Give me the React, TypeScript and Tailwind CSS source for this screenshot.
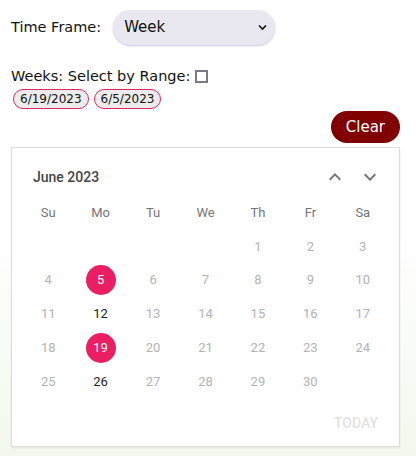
import { useState } from "react";

const weekdays = ["Su", "Mo", "Tu", "We", "Th", "Fr", "Sa"];

// June 2023 starts on a Thursday
const cells: (number | null)[] = [null, null, null, null, ...Array.from({ length: 30 }, (_, i) => i + 1)];
while (cells.length % 7) cells.push(null);

const selected = [5, 19];
const enabled = [12, 26];

function Chevron({ up }: { up?: boolean }) {
  return (
    <svg width="24" height="24" viewBox="0 0 24 24" fill="#757575">
      {up ? (
        <path d="M7.41 15.41 12 10.83l4.59 4.58L18 14l-6-6-6 6z" />
      ) : (
        <path d="M7.41 8.59 12 13.17l4.59-4.58L18 10l-6 6-6-6z" />
      )}
    </svg>
  );
}

export default function App() {
  const [byRange, setByRange] = useState(false);

  return (
    <main
      className="h-[456px] w-[416px] overflow-hidden bg-gradient-to-b from-white via-white to-[#f3f8ee] px-[11px] pt-[10px] text-[#111]"
      style={{ fontFamily: '"DejaVu Sans", sans-serif' }}
    >
      <div className="flex items-center">
        <label className="text-[14.5px]">Time Frame:</label>
        <div className="relative ml-[12px]">
          <select
            defaultValue="week"
            className="h-[35px] w-[162px] appearance-none rounded-full bg-[#e9e7ef] pl-[11px] text-[15px] shadow-[0_1px_2px_rgba(90,90,180,0.35)] outline-none"
          >
            <option value="day">Day</option>
            <option value="week">Week</option>
            <option value="month">Month</option>
          </select>
          <svg className="pointer-events-none absolute right-[8px] top-[14px]" width="9" height="7" viewBox="0 0 9 7">
            <path d="M1 1.5l3.5 3.5L8 1.5" fill="none" stroke="#111" strokeWidth="1.6" />
          </svg>
        </div>
      </div>

      <div className="mt-[21px] flex items-center text-[14.5px]">
        <span>Weeks: Select by Range:</span>
        <input
          type="checkbox"
          checked={byRange}
          onChange={(e) => setByRange(e.target.checked)}
          className="ml-[5px] h-[13px] w-[13px] appearance-none border-2 border-[#7a7a88] bg-white"
        />
      </div>

      <div className="mt-[1px] flex gap-[5px] pl-[2px]">
        {["6/19/2023", "6/5/2023"].map((d) => (
          <span key={d} className="rounded-full border border-[#e0245e] bg-[#ececec] px-[6px] py-[1px] text-[12px] leading-[16px]">
            {d}
          </span>
        ))}
      </div>

      <div className="mt-[2px] flex justify-end pr-[5px]">
        <button className="h-[32px] rounded-full bg-[#800000] px-[15px] text-[15px] text-white">Clear</button>
      </div>

      <div
        className="mt-[4px] h-[300px] w-[389px] border border-[#dcdcdc] bg-white px-[10px] shadow-[0_1px_2px_rgba(0,0,0,0.08)]"
        style={{ fontFamily: "Roboto, sans-serif" }}
      >
        <div className="flex h-[48px] items-center justify-between pl-[11px] pr-[7px] pt-[11px]">
          <span className="text-[14px] font-medium text-[#444]">June 2023</span>
          <div className="flex gap-[11px]">
            <Chevron up />
            <Chevron />
          </div>
        </div>

        <div className="grid grid-cols-7">
          {weekdays.map((w) => (
            <div key={w} className="flex h-[33.75px] items-center justify-center text-[13px] text-[#757575]">
              {w}
            </div>
          ))}
        </div>

        <div className="grid grid-cols-7">
          {cells.map((d, i) => (
            <div key={i} className="flex h-[33.75px] items-center justify-center">
              {d !== null && (
                <span
                  className={`flex h-[30px] w-[30px] items-center justify-center rounded-full text-[13px] ${
                    selected.includes(d)
                      ? "bg-[#e91e63] text-white"
                      : enabled.includes(d)
                        ? "text-[#222]"
                        : "text-[#b3b3b3]"
                  }`}
                >
                  {d}
                </span>
              )}
            </div>
          ))}
        </div>

        <div className="flex justify-end pr-[11px] pt-[17px]">
          <span className="text-[14px] font-medium leading-[16px] text-[#e3e3e3]">TODAY</span>
        </div>
      </div>
    </main>
  );
}
